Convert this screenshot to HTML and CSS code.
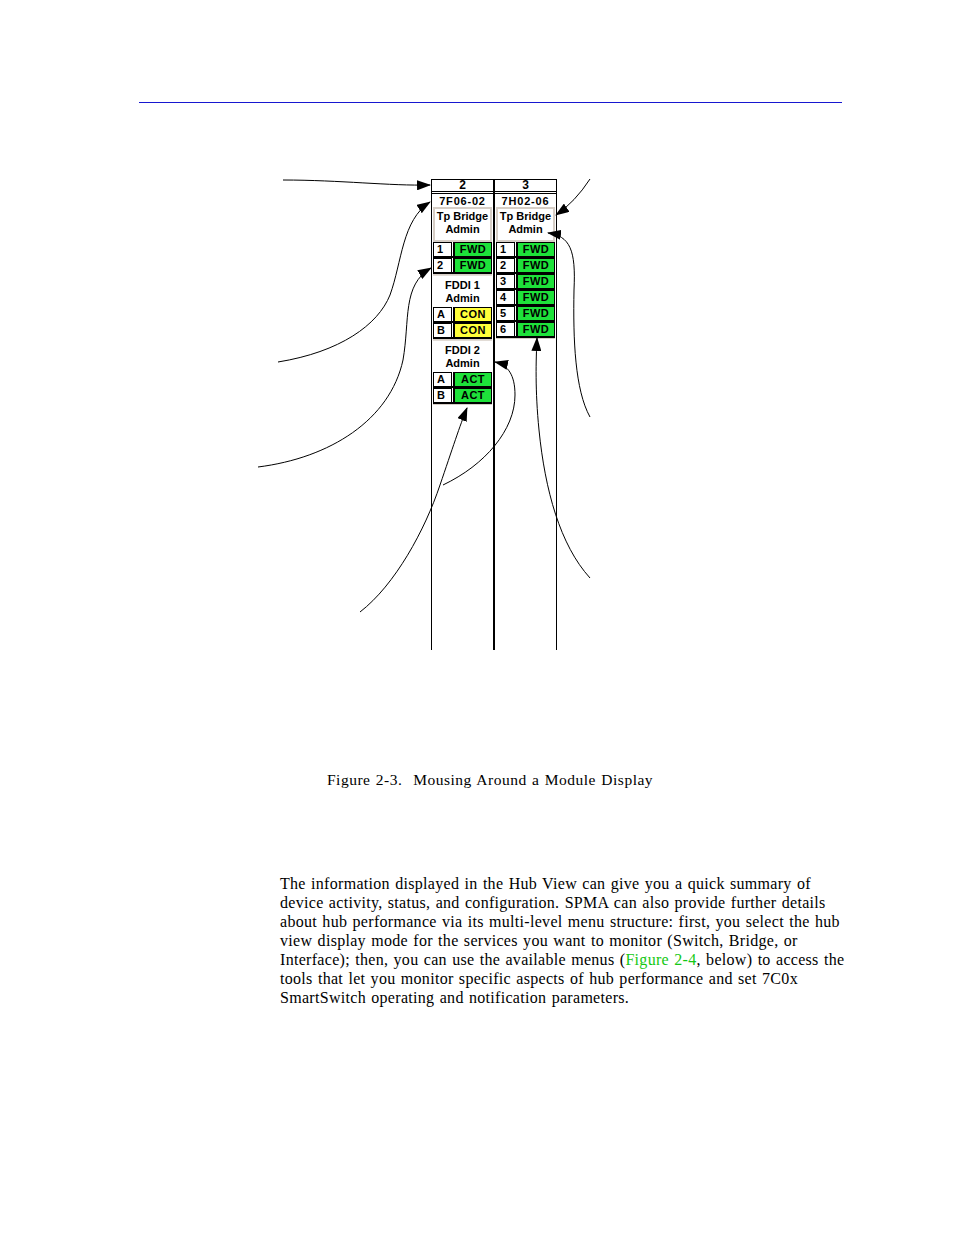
FILE: index.html
```html
<!DOCTYPE html>
<html lang="en">
<head>
<meta charset="UTF-8">
<title>Mousing Around a Module Display</title>
<link rel="stylesheet" href="styles.css">
</head>
<body>
<div class="rule"></div>

<div class="figure">
    <div class="module">
        <div class="slot">
            <div class="slot-num">2</div>
            <div class="slot-name">7F06-02</div>
            <div class="svc">Tp Bridge<br>Admin</div>
            <div class="ports">
                <div class="port"><span class="port-id">1</span><span class="port-state fwd">FWD</span></div>
                <div class="port"><span class="port-id">2</span><span class="port-state fwd">FWD</span></div>
            </div>
            <div class="svc plain">FDDI 1<br>Admin</div>
            <div class="ports">
                <div class="port"><span class="port-id">A</span><span class="port-state con">CON</span></div>
                <div class="port"><span class="port-id">B</span><span class="port-state con">CON</span></div>
            </div>
            <div class="svc plain">FDDI 2<br>Admin</div>
            <div class="ports">
                <div class="port"><span class="port-id">A</span><span class="port-state fwd">ACT</span></div>
                <div class="port"><span class="port-id">B</span><span class="port-state fwd">ACT</span></div>
            </div>
        </div>
        <div class="slot">
            <div class="slot-num">3</div>
            <div class="slot-name">7H02-06</div>
            <div class="svc">Tp Bridge<br>Admin</div>
            <div class="ports">
                <div class="port"><span class="port-id">1</span><span class="port-state fwd">FWD</span></div>
                <div class="port"><span class="port-id">2</span><span class="port-state fwd">FWD</span></div>
                <div class="port"><span class="port-id">3</span><span class="port-state fwd">FWD</span></div>
                <div class="port"><span class="port-id">4</span><span class="port-state fwd">FWD</span></div>
                <div class="port"><span class="port-id">5</span><span class="port-state fwd">FWD</span></div>
                <div class="port"><span class="port-id">6</span><span class="port-state fwd">FWD</span></div>
            </div>
        </div>
    </div>

    <!-- callout arrows, drawn in page coordinates -->
    <svg class="callouts" width="954" height="660" viewBox="0 103 954 660">
        <defs>
            <marker id="head" markerUnits="userSpaceOnUse" markerWidth="14" markerHeight="10" refX="13" refY="5" orient="auto">
                <path d="M0,0 L14,5 L0,10 Z" fill="#000"/>
            </marker>
        </defs>
        <g fill="none" stroke="#000" stroke-width="1" marker-end="url(#head)">
            <path d="M283,180 C340,180 390,186 430,185"/>
            <path d="M278,362 C340,352 378,325 390,295 C402,262 402,220 430,202"/>
            <path d="M258,467 C330,458 390,420 403,360 C410,320 402,285 431,268"/>
            <path d="M360,612 C395,585 425,530 440,485 C452,450 460,425 467,408"/>
            <path d="M443,485 C485,465 515,430 515,395 C515,375 508,365 495,362"/>
            <path d="M590,179 Q575,202 556,215"/>
            <path d="M590,417 C575,390 573,340 574,290 C576,250 570,236 548,233"/>
            <path d="M590,578 C560,545 545,490 539,430 C535,390 536,360 537,338"/>
        </g>
    </svg>
</div>

<p class="caption">Figure 2-3.&nbsp; Mousing Around a Module Display</p>

<p class="body-text">The information displayed in the Hub View can give you a quick summary of<br>
device activity, status, and configuration. SPMA can also provide further details<br>
about hub performance via its multi-level menu structure: first, you select the hub<br>
view display mode for the services you want to monitor (Switch, Bridge, or<br>
Interface); then, you can use the available menus (<a class="xref" href="#">Figure 2-4</a>, below) to access the<br>
tools that let you monitor specific aspects of hub performance and set 7C0x<br>
SmartSwitch operating and notification parameters.</p>
</body>
</html>
```

FILE: styles.css
```css
body {
    margin: 0;
    font-family: "Liberation Serif", "Times New Roman", serif;
    color: #000;
    background: #fff;
}
.rule {
    margin: 102px 0 0 139px;
    width: 703px;
    border-top: 1px solid #1717d0;
}
.figure {
    position: relative;
    height: 660px;
}
.module {
    display: flex;
    padding: 76px 0 0 431px;
    font-family: "Liberation Sans", Arial, sans-serif;
    font-size: 11px;
    font-weight: bold;
    line-height: 12px;
}
.slot {
    width: 61px;
    height: 471px;
    border-left: 1px solid #000;
    border-right: 1px solid #000;
    display: flex;
    flex-direction: column;
}
.slot-num {
    height: 11px;
    border-top: 1px solid #000;
    border-bottom: 1px solid #000;
    text-align: center;
    line-height: 11px;
    font-size: 12px;
}
.slot-name {
    margin-top: 1px;
    height: 13px;
    border-top: 1px solid #000;
    text-align: center;
    line-height: 14px;
    letter-spacing: 0.8px;
}
.svc {
    margin: 0 1px;
    height: 30px;
    border: 2px solid #d6cec6;
    text-align: center;
    padding-top: 1px;
    line-height: 13px;
}
.svc.plain {
    border: none;
    border-top: 1px solid #e2dcd6;
    height: 28px;
    padding-top: 3px;
}
.ports {
    margin: 0 1px;
    border-bottom: 1px solid #d6cec6;
}
.port {
    display: flex;
    height: 16px;
    box-sizing: border-box;
    border-bottom: 2px solid #000;
}
.port-id {
    width: 14px;
    padding-left: 3px;
    border: 1px solid #000;
    border-bottom: none;
    background: #fff;
    line-height: 12px;
}
.port-state {
    flex: 1;
    margin-left: 1px;
    border-top: 1px solid #000;
    border-right: 1px solid #000;
    border-left: 2px solid #000;
    text-align: center;
    line-height: 12px;
    letter-spacing: 0.5px;
}
.fwd {
    background: #1ee23a;
}
.con {
    background: #ffff3a;
}
.callouts {
    position: absolute;
    left: 0;
    top: 0;
}
.caption {
    margin: 7px 0 0 327px;
    font-size: 15.5px;
    line-height: 19px;
    letter-spacing: 0.5px;
    word-spacing: 1px;
}
.body-text {
    margin: 85px 0 0 280px;
    font-size: 16px;
    line-height: 19px;
    letter-spacing: 0.3px;
    word-spacing: 1px;
}
.xref {
    color: #14c814;
    text-decoration: none;
}
```
